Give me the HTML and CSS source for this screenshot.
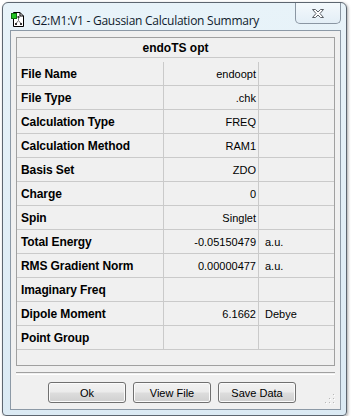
FILE: index.html
```html
<!DOCTYPE html>
<html lang="en">
<head>
    <meta charset="UTF-8">
    <title>G2:M1:V1 - Gaussian Calculation Summary</title>
    <link rel="stylesheet" href="styles.css">
</head>
<body>
    <div class="window">
        <div class="titlebar">
            <svg class="app-icon" width="13" height="16" viewBox="0 0 13 16">
                <path d="M2.5 1.5 H9 L12.5 5 V15.5 H2.5 Z" fill="#ffffff" stroke="#000000"/>
                <path d="M9 1.5 V5 H12.5" fill="none" stroke="#000000"/>
                <g stroke="#7a7a7a" stroke-width="1">
                    <line x1="7.5" y1="6" x2="7.5" y2="9.5"/>
                    <line x1="7.5" y1="9.5" x2="5" y2="12.5"/>
                    <line x1="7.5" y1="9.5" x2="10" y2="12.5"/>
                </g>
                <rect x="6.5" y="5" width="2" height="2" fill="#333"/>
                <rect x="4" y="12" width="2" height="2" fill="#333"/>
                <rect x="9" y="12" width="2" height="2" fill="#333"/>
                <rect x="0.5" y="2.5" width="5" height="5" fill="#22c322" stroke="#0c6e0c"/>
            </svg>
            <span class="title">G2:M1:V1 - Gaussian Calculation Summary</span>
            <div class="close-btn">
                <svg width="14" height="11" viewBox="0 0 14 11">
                    <path d="M1.5 1.5 H4.5 L7 4 L9.5 1.5 H12.5 L9 5.5 L12.5 9.5 H9.5 L7 7 L4.5 9.5 H1.5 L5 5.5 Z" fill="#ffffff" stroke="#5a5f66" stroke-linejoin="round"/>
                </svg>
            </div>
        </div>

        <div class="client">
            <div class="summary">
                <div class="grid">
                    <div class="head">endoTS opt</div>

                    <div class="label">File Name</div>
                    <div class="value">endoopt</div>
                    <div class="unit"></div>

                    <div class="label">File Type</div>
                    <div class="value">.chk</div>
                    <div class="unit"></div>

                    <div class="label">Calculation Type</div>
                    <div class="value">FREQ</div>
                    <div class="unit"></div>

                    <div class="label">Calculation Method</div>
                    <div class="value">RAM1</div>
                    <div class="unit"></div>

                    <div class="label">Basis Set</div>
                    <div class="value">ZDO</div>
                    <div class="unit"></div>

                    <div class="label">Charge</div>
                    <div class="value">0</div>
                    <div class="unit"></div>

                    <div class="label">Spin</div>
                    <div class="value">Singlet</div>
                    <div class="unit"></div>

                    <div class="label">Total Energy</div>
                    <div class="value">-0.05150479</div>
                    <div class="unit">a.u.</div>

                    <div class="label">RMS Gradient Norm</div>
                    <div class="value">0.00000477</div>
                    <div class="unit">a.u.</div>

                    <div class="label">Imaginary Freq</div>
                    <div class="value"></div>
                    <div class="unit"></div>

                    <div class="label">Dipole Moment</div>
                    <div class="value">6.1662</div>
                    <div class="unit">Debye</div>

                    <div class="label">Point Group</div>
                    <div class="value"></div>
                    <div class="unit"></div>
                </div>
            </div>

            <div class="separator"></div>

            <div class="buttons">
                <button class="btn">Ok</button>
                <button class="btn">View File</button>
                <button class="btn">Save Data</button>
            </div>

            <svg class="grip" width="11" height="11" viewBox="0 0 11 11">
                <g fill="#b8b8b8">
                    <rect x="8" y="0" width="1" height="1"/>
                    <rect x="8" y="4" width="1" height="1"/>
                    <rect x="8" y="8" width="1" height="1"/>
                    <rect x="4" y="4" width="1" height="1"/>
                    <rect x="4" y="8" width="1" height="1"/>
                    <rect x="0" y="8" width="1" height="1"/>
                </g>
                <g fill="#ffffff">
                    <rect x="9" y="1" width="1" height="1"/>
                    <rect x="9" y="5" width="1" height="1"/>
                    <rect x="9" y="9" width="1" height="1"/>
                    <rect x="5" y="5" width="1" height="1"/>
                    <rect x="5" y="9" width="1" height="1"/>
                    <rect x="1" y="9" width="1" height="1"/>
                </g>
            </svg>
        </div>
    </div>
</body>
</html>
```

FILE: styles.css
```css
body {
    margin: 0;
    background: #ffffff;
    font-family: "Liberation Sans", Arial, sans-serif;
    color: #000000;
}
.window {
    margin: 2px 0 0 2px;
    width: 345px;
    height: 414px;
    box-sizing: border-box;
    border: 1px solid #5d6670;
    border-radius: 6px 6px 4px 4px;
    background: linear-gradient(#e8f3f9, #dbeaf4);
    box-shadow: 1px 1px 3px rgba(0, 0, 0, 0.35);
    display: flex;
    flex-direction: column;
}
.titlebar {
    height: 28px;
    display: flex;
    align-items: flex-start;
}
.app-icon {
    margin: 8px 0 0 8px;
    flex: none;
}
.title {
    margin: 9px 0 0 8px;
    font-family: "Open Sans", "Noto Sans", sans-serif;
    font-size: 12px;
    letter-spacing: -0.25px;
    color: #0f1a2c;
    white-space: nowrap;
}
.close-btn {
    margin: 0 5px 0 auto;
    width: 46px;
    height: 21px;
    box-sizing: border-box;
    border: 1px solid #8a96a2;
    border-top: none;
    border-radius: 0 0 5px 5px;
    background: linear-gradient(#f4f9fc, #e3eef6);
    display: flex;
    align-items: center;
    justify-content: center;
}
.client {
    position: relative;
    flex: 1;
    margin: 0 5px 5px 7px;
    border: 1px solid #8c99a6;
    background: #f0f0f0;
    padding: 6px 5px 6px 5px;
    display: flex;
    flex-direction: column;
}
.summary {
    height: 329px;
    box-sizing: border-box;
    border: 1px solid #a0a0a0;
    background: #f0f0f0;
}
.grid {
    display: grid;
    grid-template-columns: 147px 95px 1fr;
    grid-auto-rows: 24px;
    font-size: 11px;
}
.grid > div {
    box-sizing: border-box;
    border-bottom: 1px solid #cacaca;
    display: flex;
    align-items: center;
    white-space: nowrap;
}
.head {
    grid-column: 1 / 4;
    height: 20px;
    justify-content: center;
    font-weight: bold;
    font-size: 12px;
}
.label {
    border-right: 1px solid #cacaca;
    padding-left: 4px;
    font-weight: bold;
    font-size: 12px;
    letter-spacing: -0.1px;
}
.value {
    border-right: 1px solid #cacaca;
    justify-content: flex-end;
    padding-right: 2px;
}
.unit {
    padding-left: 6px;
}
.separator {
    margin-top: 6px;
    height: 1px;
    border-top: 1px solid #a0a0a0;
    border-bottom: 1px solid #ffffff;
}
.buttons {
    margin-top: 7px;
    padding-left: 32px;
    display: flex;
    gap: 7px;
}
.btn {
    width: 78px;
    height: 21px;
    padding: 0;
    border: 1px solid #707070;
    border-radius: 3px;
    background: linear-gradient(#f2f2f2 0%, #ebebeb 48%, #dddddd 52%, #cfcfcf 100%);
    box-shadow: inset 0 0 0 1px #fbfbfb;
    font-family: "Liberation Sans", Arial, sans-serif;
    font-size: 11px;
    color: #000000;
}
.grip {
    position: absolute;
    right: 4px;
    bottom: 4px;
}
```
